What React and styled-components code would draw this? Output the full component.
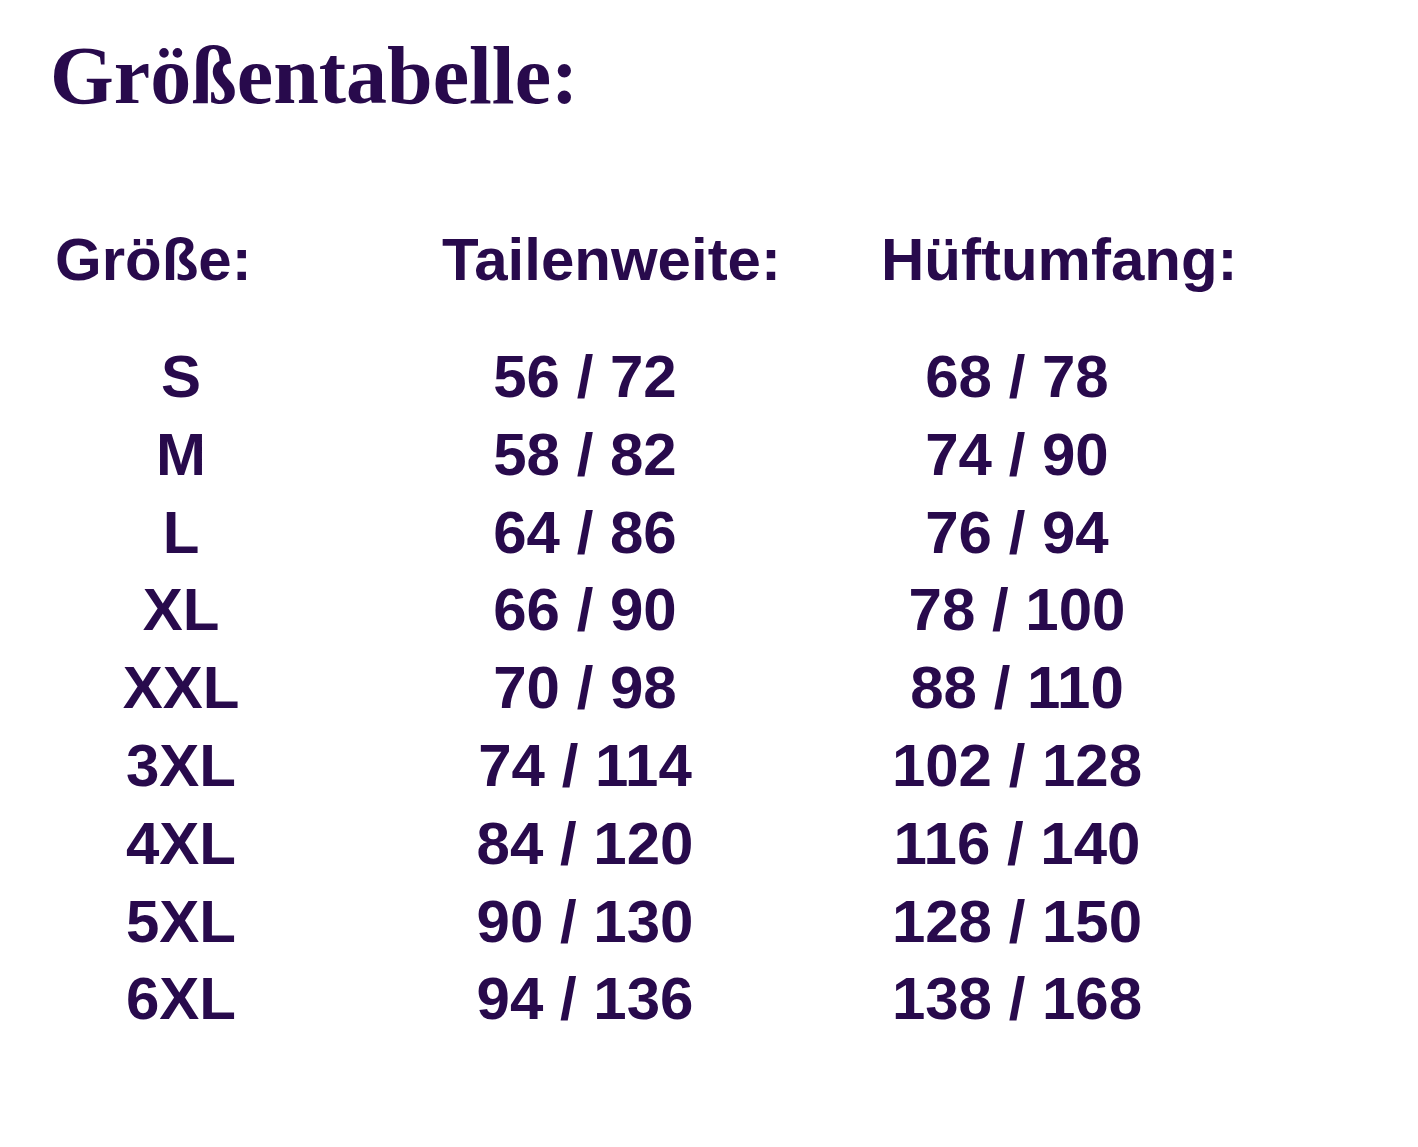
import React from "react";
import styled, { createGlobalStyle } from "styled-components";

const Global = createGlobalStyle`
  html, body { margin: 0; padding: 0; background: #ffffff; }
  body { font-family: "Liberation Sans", Arial, sans-serif; }
`;

const Page = styled.div`
  width: 1418px;
  min-height: 1147px;
  box-sizing: border-box;
  padding: 35px 0 0 50px;
  color: #280a4c;
`;

const Title = styled.h1`
  margin: 0;
  font-family: "Liberation Serif", "Times New Roman", serif;
  font-weight: 700;
  font-size: 82px;
  line-height: 82px;
`;

const Table = styled.div`
  margin: 113px 0 0 5px;
  display: grid;
  grid-template-columns: 387px 439px 1fr;
  font-family: "Liberation Sans", Arial, sans-serif;
  font-weight: 700;
  font-size: 60px;
`;

const Head = styled.div`
  line-height: 60px;
  margin-bottom: 48px;
  white-space: nowrap;
`;

const Cell = styled.div`
  width: ${(p) => p.$w}px;
  text-align: center;
  line-height: 77.8px;
  white-space: nowrap;
`;

const rows = [
  ["S", "56 / 72", "68 / 78"],
  ["M", "58 / 82", "74 / 90"],
  ["L", "64 / 86", "76 / 94"],
  ["XL", "66 / 90", "78 / 100"],
  ["XXL", "70 / 98", "88 / 110"],
  ["3XL", "74 / 114", "102 / 128"],
  ["4XL", "84 / 120", "116 / 140"],
  ["5XL", "90 / 130", "128 / 150"],
  ["6XL", "94 / 136", "138 / 168"],
];

const widths = [252, 286, 272];

export default function App() {
  return (
    <>
      <Global />
      <Page>
        <Title>Größentabelle:</Title>
        <Table>
          <Head>Größe:</Head>
          <Head>Tailenweite:</Head>
          <Head>Hüftumfang:</Head>
          {rows.map((r) =>
            r.map((v, i) => (
              <Cell key={r[0] + i} $w={widths[i]}>
                {v}
              </Cell>
            ))
          )}
        </Table>
      </Page>
    </>
  );
}
